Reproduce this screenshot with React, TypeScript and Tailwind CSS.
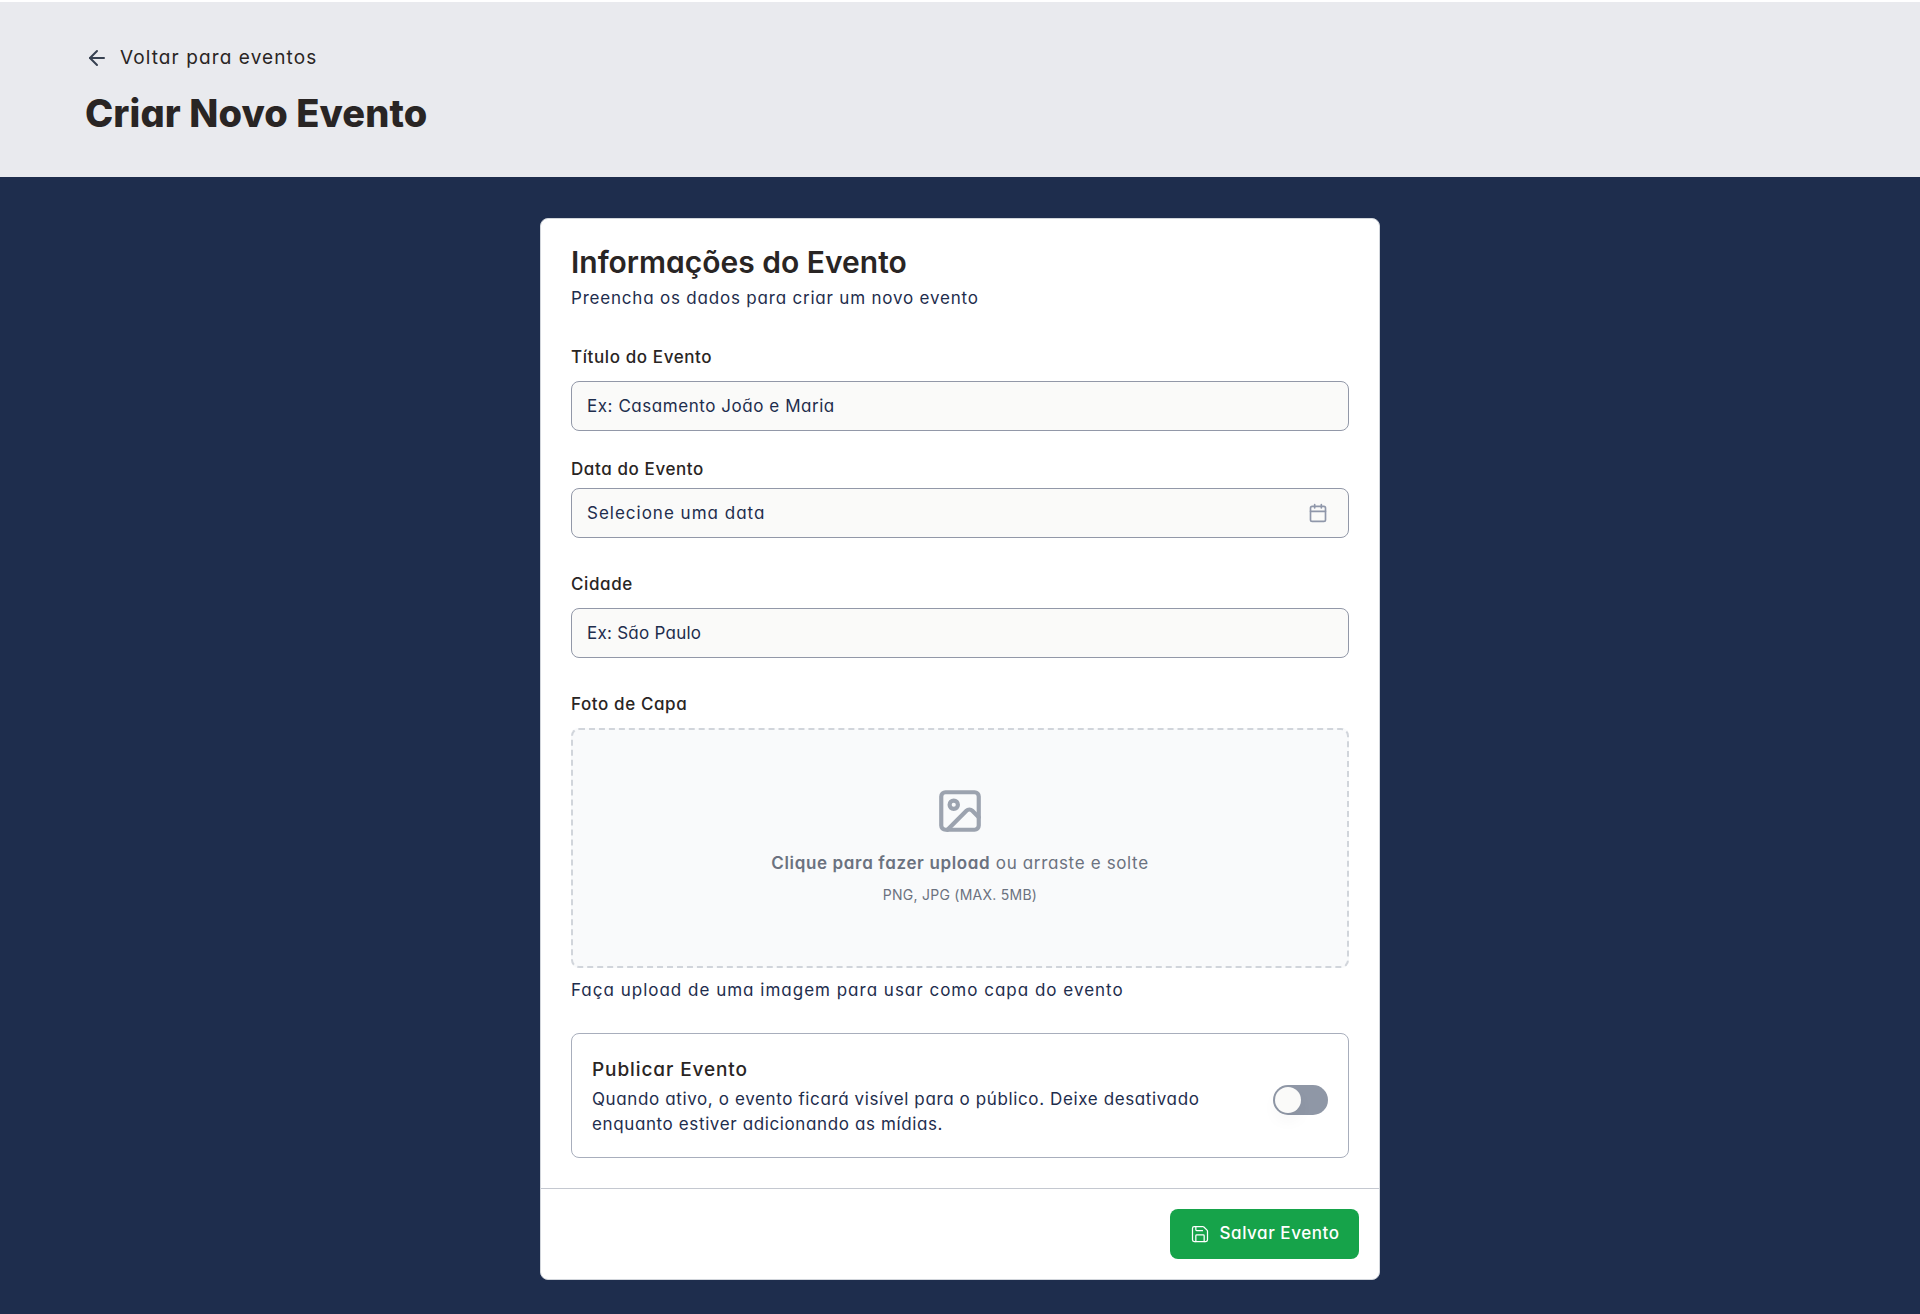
import { ArrowLeft, Calendar, Image, Save } from "lucide-react";

function Label({ children, className = "" }: { children: React.ReactNode; className?: string }) {
  return <label className={`block text-[17px] leading-6 font-medium text-[#292524] tracking-[0.6px] ${className}`}>{children}</label>;
}

function TextField({ placeholder, className = "" }: { placeholder: string; className?: string }) {
  return (
    <input
      type="text"
      placeholder={placeholder}
      className={`block w-full h-[50px] px-[15px] rounded-lg border border-[#9298a8] bg-[#fafaf9] text-[17px] text-[#1e2d4d] placeholder:text-[#1e2d4d] placeholder:opacity-100 outline-none ${className}`}
    />
  );
}

export default function App() {
  return (
    <div className="min-h-screen bg-[#1e2d4d] [font-family:Inter,sans-serif] [font-feature-settings:'cv11']">
      {/* Header */}
      <header className="h-[177px] bg-[#e9eaee] border-t-2 border-white pt-[42px] pl-[85px]">
        <a className="flex items-center gap-[11px] text-[19px] leading-7 text-[#292524] tracking-[1.1px]">
          <ArrowLeft className="w-6 h-6 text-[#374151]" strokeWidth={2} />
          Voltar para eventos
        </a>
        <h1 className="mt-[21px] text-[38px] leading-10 font-extrabold text-[#292524] tracking-[0.1px]">Criar Novo Evento</h1>
      </header>

      {/* Form card */}
      <main className="flex justify-center pt-[41px] pb-[34px]">
        <div className="w-[840px] bg-white rounded-lg border border-[#d1d5db]">
          <div className="px-[30px] pt-[25px]">
            <h2 className="text-3xl leading-9 font-semibold text-[#292524]">Informações do Evento</h2>
            <p className="mt-[6px] text-[17px] leading-6 text-[#1e2d4d] tracking-[0.8px]">Preencha os dados para criar um novo evento</p>

            <Label className="mt-[35px] mb-[12px]">Título do Evento</Label>
            <TextField placeholder="Ex: Casamento João e Maria" className="tracking-[0.55px]" />

            <Label className="mt-[26px] mb-[7px]">Data do Evento</Label>
            <button className="flex items-center justify-between w-full h-[50px] pl-[15px] pr-[20px] rounded-lg border border-[#9298a8] bg-[#fafaf9] text-[17px] text-[#1e2d4d] tracking-[1px]">
              <span className="mt-[2px]">Selecione uma data</span>
              <Calendar className="w-5 h-5 text-[#8f97aa]" />
            </button>

            <Label className="mt-[34px] mb-[12px]">Cidade</Label>
            <TextField placeholder="Ex: São Paulo" className="tracking-[0.25px]" />

            <Label className="mt-[34px] mb-[12px]">Foto de Capa</Label>
            <div className="flex flex-col items-center h-[240px] pt-[56px] rounded-lg border-2 border-dashed border-[#d1d5db] bg-[#f9fafb]">
              <Image className="w-[50px] h-[50px] text-[#9ca3af]" />
              <p className="mt-[15px] text-[17px] leading-6 text-[#6b7280] tracking-[0.65px]">
                <span className="font-semibold">Clique para fazer upload</span> ou arraste e solte
              </p>
              <p className="mt-[10px] text-sm leading-5 text-[#6b7280] tracking-[0.25px]">PNG, JPG (MAX. 5MB)</p>
            </div>
            <p className="mt-[10px] text-[17px] leading-6 text-[#1e2d4d] tracking-[1px]">Faça upload de uma imagem para usar como capa do evento</p>

            <div className="flex items-start justify-between mt-[31px] h-[125px] px-[20px] pt-[22px] rounded-lg border border-[#a8aebc]">
              <div className="w-[625px]">
                <div className="mb-[3px] text-[19px] leading-7 font-medium text-[#292524] tracking-[0.9px]">Publicar Evento</div>
                <p className="text-[17px] leading-[25px] text-[#1e2d4d] tracking-[0.62px]">
                  Quando ativo, o evento ficará visível para o público. Deixe desativado enquanto estiver adicionando as mídias.
                </p>
              </div>
              <div className="flex items-center mt-[29px] w-[55px] h-[30px] rounded-full bg-[#8f97a6] p-[2px]">
                <span className="block w-[26px] h-[26px] rounded-full bg-[#fafaf9] shadow-[0_8px_16px_rgba(0,0,0,0.04)]" />
              </div>
            </div>
          </div>

          {/* Footer */}
          <div className="flex justify-end mt-[30px] p-[20px] border-t border-[#c4c8d0]">
            <button className="flex items-center justify-center gap-[10px] w-[189px] h-[50px] rounded-lg bg-[#16a34a] text-[17px] font-medium text-white tracking-[0.55px]">
              <Save className="w-5 h-5" strokeWidth={1.5} />
              Salvar Evento
            </button>
          </div>
        </div>
      </main>
    </div>
  );
}
